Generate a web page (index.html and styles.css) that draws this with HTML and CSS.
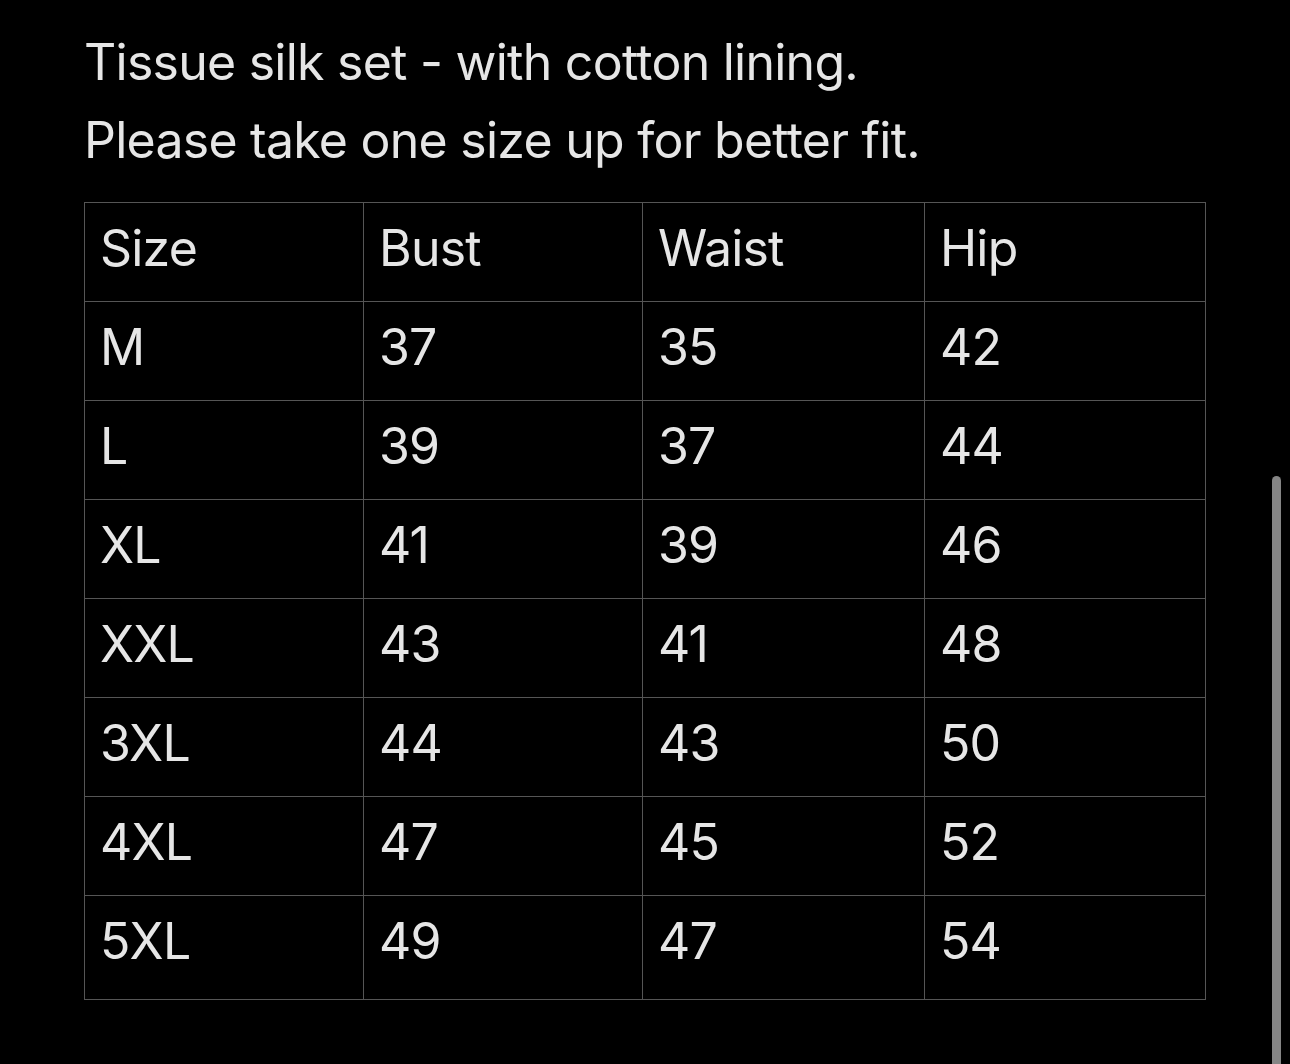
FILE: index.html
```html
<!DOCTYPE html>
<html lang="en">
<head>
<meta charset="utf-8">
<title>Size chart</title>
<link rel="stylesheet" href="styles.css">
</head>
<body>
<main class="page">
  <p class="note">Tissue silk set - with cotton lining.</p>
  <p class="note">Please take one size up for better fit.</p>
  <table class="chart">
    <tr><td>Size</td><td>Bust</td><td>Waist</td><td>Hip</td></tr>
    <tr><td>M</td><td>37</td><td>35</td><td>42</td></tr>
    <tr><td>L</td><td>39</td><td>37</td><td>44</td></tr>
    <tr><td>XL</td><td>41</td><td>39</td><td>46</td></tr>
    <tr><td>XXL</td><td>43</td><td>41</td><td>48</td></tr>
    <tr><td>3XL</td><td>44</td><td>43</td><td>50</td></tr>
    <tr><td>4XL</td><td>47</td><td>45</td><td>52</td></tr>
    <tr class="last"><td>5XL</td><td>49</td><td>47</td><td>54</td></tr>
  </table>
</main>
<div class="scrollbar"></div>
</body>
</html>
```
FILE: styles.css
```css
html, body {
  margin: 0;
  padding: 0;
  background: #000;
  height: 100%;
  overflow: hidden;
}
.page {
  padding: 23px 0 0 84px;
  font-family: Inter, "Noto Sans", sans-serif;
  color: #e6e6e6;
}
.note {
  margin: 0;
  font-size: 50px;
  line-height: 78px;
  letter-spacing: -0.75px;
}
.chart {
  margin-top: 23px;
  border-collapse: collapse;
  width: 1121px;
  table-layout: fixed;
  font-size: 50px;
  line-height: 60px;
  letter-spacing: -0.8px;
}
.chart td {
  border: 1px solid #555;
  height: 99px;
  padding: 15px 0 0 15px;
  vertical-align: top;
  box-sizing: border-box;
}
.chart td:nth-child(1) { width: 279px; }
.chart td:nth-child(2) { width: 279px; }
.chart td:nth-child(3) { width: 282px; }
.chart td:nth-child(4) { width: 281px; }
.chart tr.last td { height: 104px; }
.scrollbar {
  position: fixed;
  left: 1272px;
  top: 476px;
  width: 9px;
  bottom: 0;
  background: #858585;
  border-radius: 5px 5px 0 0;
}
```
